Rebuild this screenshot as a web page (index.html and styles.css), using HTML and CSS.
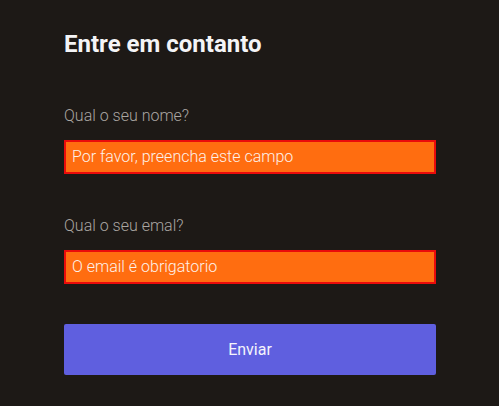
FILE: index.html
```html
<!DOCTYPE html>
<html lang="pt">
<head>
<meta charset="utf-8">
<title>Entre em contanto</title>
<link rel="stylesheet" href="styles.css">
</head>
<body>
<main class="contact">
  <h1 class="contact__title">Entre em contanto</h1>
  <form class="contact__form">
    <div class="field">
      <label class="field__label" for="nome">Qual o seu nome?</label>
      <div class="field__input" id="nome">Por favor, preencha este campo</div>
    </div>
    <div class="field">
      <label class="field__label" for="email">Qual o seu emal?</label>
      <div class="field__input" id="email">O email é obrigatorio</div>
    </div>
    <button type="button" class="contact__submit">Enviar</button>
  </form>
</main>
</body>
</html>
```
FILE: styles.css
```css
html, body {
  margin: 0;
  padding: 0;
  background: #1d1916;
}
body {
  font-family: Roboto, "Liberation Sans", sans-serif;
  width: 499px;
  height: 406px;
  overflow: hidden;
}
.contact {
  width: 372px;
  padding: 30px 0 0 64px;
}
.contact__title {
  margin: 0;
  font-size: 24px;
  font-weight: 700;
  line-height: 28px;
  color: #f4f4f6;
}
.contact__form {
  display: flex;
  flex-direction: column;
  margin-top: 48px;
}
.field {
  display: flex;
  flex-direction: column;
  gap: 15px;
  margin-bottom: 42px;
}
.field__label {
  font-size: 16px;
  font-weight: 300;
  line-height: 19px;
  color: #aaa6a2;
}
.field__input {
  box-sizing: border-box;
  height: 34px;
  border: 2px solid #ea0b0b;
  background: #ff6d10;
  color: #fdf1ea;
  font-size: 16px;
  font-weight: 300;
  line-height: 30px;
  padding-left: 6px;
}
.contact__submit {
  margin-top: -2px;
  height: 51px;
  border: none;
  border-radius: 2px;
  background: #5f5fdf;
  color: #f4f4fb;
  font-family: Roboto, "Liberation Sans", sans-serif;
  font-size: 16px;
  padding: 0;
}
```
